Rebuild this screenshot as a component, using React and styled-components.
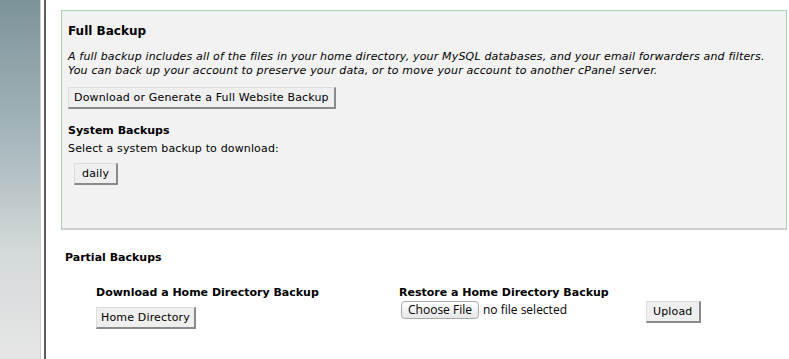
import React from "react";
import styled, { createGlobalStyle } from "styled-components";

const Global = createGlobalStyle`
  html, body { margin: 0; padding: 0; background: #fff; }
  body { font-family: "DejaVu Sans", Verdana, sans-serif; font-size: 11px; color: #000; }
`;

const Page = styled.div`
  display: flex;
  min-height: 100vh;
  height: 359px;
  overflow: hidden;
`;

const Sidebar = styled.div`
  width: 40px;
  flex: none;
  background: linear-gradient(to bottom, #7c939a 0%, #a8b8bc 40%, #d4d9da 70%, #e6e6e6 100%);
  border-right: 1px solid #d0d0d0;
`;

const Main = styled.div`
  flex: 1;
  margin-left: 3px;
  border-left: 2px solid #5e5e5e;
  padding: 10px 2px 0 15px;
`;

const Panel = styled.section`
  box-sizing: border-box;
  height: 220px;
  background: #f2f2f2;
  border: 1px solid #a6d3ab;
  border-bottom: 2px solid #cfcfcf;
  padding: 12px 6px 0 6px;
`;

const Title = styled.h2`
  margin: 0;
  font-size: 12px;
  line-height: 16px;
  font-weight: bold;
`;

const Desc = styled.p`
  margin: 11px 0 9px;
  font-style: italic;
  line-height: 14px;
  letter-spacing: 0.17px;
`;

const SubTitle = styled.h3`
  margin: ${(p) => p.$mt || 0}px 0 ${(p) => p.$mb || 0}px;
  font-size: 11px;
  line-height: 14px;
  font-weight: bold;
`;

const Text = styled.div`
  line-height: 14px;
  letter-spacing: 0.15px;
`;

const Button = styled.button`
  display: inline-block;
  font-family: "DejaVu Sans", Verdana, sans-serif;
  font-size: 11px;
  line-height: 14px;
  letter-spacing: 0.16px;
  color: #000;
  background: #efefef;
  border: 1px solid #dcdcdc;
  border-right: 2px solid #8a8a8a;
  border-bottom: 2px solid #8a8a8a;
  padding: 3px ${(p) => p.$px || 5}px 2px;
  margin: ${(p) => p.$m || 0};
  border-radius: 0;
  cursor: pointer;
`;

const Partial = styled.section`
  padding: 21px 0 0 4px;
`;

const Columns = styled.div`
  display: grid;
  grid-template-columns: 303px 1fr;
  padding: 21px 0 0 31px;
`;

const Column = styled.div`
  display: flex;
  flex-direction: column;
  align-items: flex-start;
`;

const UploadRow = styled.div`
  display: flex;
  align-items: flex-start;
  margin-top: 1px;
`;

const FileBox = styled.div`
  display: flex;
  align-items: center;
  width: 245px;
  margin-left: 2px;
`;

const ChooseFile = styled.button`
  box-sizing: border-box;
  height: 18px;
  width: 78px;
  padding: 0;
  font-family: "Open Sans", "Liberation Sans", sans-serif;
  font-size: 12px;
  line-height: 16px;
  color: #000;
  background: linear-gradient(to bottom, #ffffff, #e6e6e6);
  border: 1px solid #a8a8a8;
  border-radius: 4px;
`;

const FileName = styled.span`
  margin-left: 4px;
  font-family: "Open Sans", "Liberation Sans", sans-serif;
  font-size: 12px;
  line-height: 16px;
`;

export default function App() {
  return (
    <>
      <Global />
      <Page>
        <Sidebar />
        <Main>
          <Panel>
            <Title>Full Backup</Title>
            <Desc>
              A full backup includes all of the files in your home directory, your MySQL databases, and your email forwarders and filters.
              <br />
              You can back up your account to preserve your data, or to move your account to another cPanel server.
            </Desc>
            <Button>Download or Generate a Full Website Backup</Button>
            <SubTitle $mt={15} $mb={4}>System Backups</SubTitle>
            <Text>Select a system backup to download:</Text>
            <Button $px={7} $m="7px 0 0 6px">daily</Button>
          </Panel>
          <Partial>
            <SubTitle>Partial Backups</SubTitle>
            <Columns>
              <Column>
                <SubTitle $mb={7}>Download a Home Directory Backup</SubTitle>
                <Button $px={4}>Home Directory</Button>
              </Column>
              <Column>
                <SubTitle>Restore a Home Directory Backup</SubTitle>
                <UploadRow>
                  <FileBox>
                    <ChooseFile>Choose File</ChooseFile>
                    <FileName>no file selected</FileName>
                  </FileBox>
                  <Button $px={6}>Upload</Button>
                </UploadRow>
              </Column>
            </Columns>
          </Partial>
        </Main>
      </Page>
    </>
  );
}
